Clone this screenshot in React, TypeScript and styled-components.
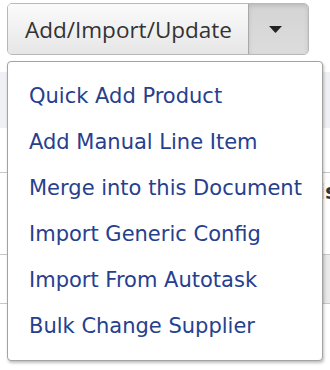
import React from "react";
import styled, { createGlobalStyle } from "styled-components";

const Global = createGlobalStyle`
  html, body { margin: 0; padding: 0; background: #ffffff; }
  body { width: 330px; height: 370px; overflow: hidden; }
`;

const Page = styled.div`
  position: relative;
  width: 330px;
  height: 370px;
  overflow: hidden;
  background: #fff;
`;

const Toolbar = styled.div`
  display: flex;
  padding: 3px 0 0 7px;
  height: 52px;
`;

const SplitButton = styled.div`
  display: flex;
  height: 52px;
  border: 1px solid #b8b8b8;
  border-radius: 5px;
  overflow: hidden;
  box-sizing: border-box;
`;

const MainButton = styled.button`
  width: 240px;
  height: 100%;
  border: none;
  padding: 0 0 0 17px;
  text-align: left;
  font-family: "Open Sans", "DejaVu Sans", sans-serif;
  font-size: 22.5px;
  color: #333;
  background: linear-gradient(#fbfbfb, #e6e6e6);
`;

const CaretButton = styled.button`
  width: 60px;
  height: 100%;
  border: none;
  border-left: 1px solid #a8a8a8;
  background: linear-gradient(#d4d4d4, #dcdcdc);
  box-shadow: inset 0 2px 4px rgba(0, 0, 0, 0.12);
  display: flex;
  align-items: center;
  justify-content: center;
  padding: 0 6px 0 0;
`;

const Table = styled.div`
  display: flex;
  flex-direction: column;
  margin-top: 17px;
`;

const Band = styled.div`
  height: 56px;
  background: #eef0f4;
`;

const Row = styled.div<{ $h: number; $shade?: boolean }>`
  height: ${(p) => p.$h}px;
  border-bottom: 1px solid #c8c8c8;
  box-sizing: border-box;
  display: flex;
  justify-content: flex-end;
  align-items: flex-start;
  background: ${(p) => (p.$shade ? "linear-gradient(90deg, #fff 97%, #e4e4e4 98%, #ececec)" : "transparent")};
`;

const CellText = styled.span`
  font-family: "DejaVu Sans", sans-serif;
  font-weight: bold;
  font-size: 22px;
  color: #333;
  margin-top: 6px;
  margin-right: -8px;
`;

const Menu = styled.ul`
  position: absolute;
  top: 61px;
  left: 7px;
  width: 316px;
  height: 300px;
  box-sizing: border-box;
  margin: 0;
  padding: 11px 0 0 0;
  list-style: none;
  background: #fff;
  border: 1px solid #a3a3a3;
  border-radius: 4px;
  box-shadow: 1px 2px 3px rgba(0, 0, 0, 0.25);
`;

const Item = styled.li`
  height: 46px;
  line-height: 46px;
  padding-left: 21px;
  font-family: "DejaVu Sans", sans-serif;
  font-size: 21px;
  color: #26408e;
  white-space: nowrap;
`;

const items = [
  "Quick Add Product",
  "Add Manual Line Item",
  "Merge into this Document",
  "Import Generic Config",
  "Import From Autotask",
  "Bulk Change Supplier",
];

export default function App() {
  return (
    <Page>
      <Global />
      <Toolbar>
        <SplitButton>
          <MainButton>Add/Import/Update</MainButton>
          <CaretButton>
            <svg width="13" height="7" viewBox="0 0 13 7">
              <path d="M0 0 L13 0 L6.5 7 Z" fill="#222" />
            </svg>
          </CaretButton>
        </SplitButton>
      </Toolbar>
      <Table>
        <Band />
        <Row $h={45} />
        <Row $h={82}>
          <CellText>is</CellText>
        </Row>
        <Row $h={49} $shade />
      </Table>
      <Menu>
        {items.map((t) => (
          <Item key={t}>{t}</Item>
        ))}
      </Menu>
    </Page>
  );
}
